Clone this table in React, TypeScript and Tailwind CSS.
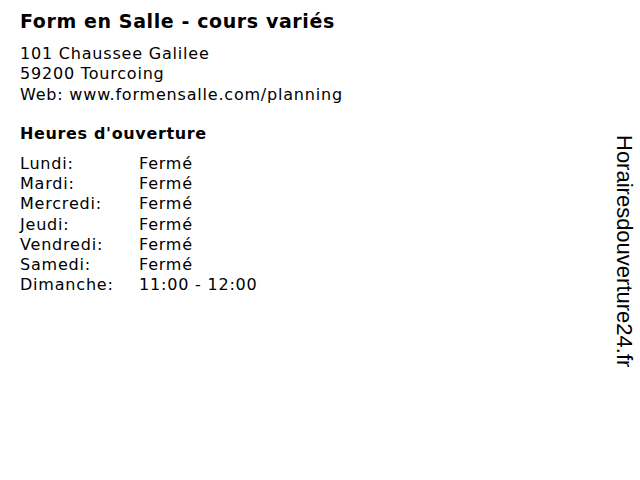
const hours = [
  { day: 'Lundi:', time: 'Fermé' },
  { day: 'Mardi:', time: 'Fermé' },
  { day: 'Mercredi:', time: 'Fermé' },
  { day: 'Jeudi:', time: 'Fermé' },
  { day: 'Vendredi:', time: 'Fermé' },
  { day: 'Samedi:', time: 'Fermé' },
  { day: 'Dimanche:', time: '11:00 - 12:00' },
];

export default function App() {
  return (
    <div className="relative w-[640px] h-[480px] bg-white text-black font-['DejaVu_Sans',sans-serif]">
      <div className="flex flex-col pl-5 pt-[9px]">
        <h1 className="text-[19px] leading-6 font-bold tracking-[0.6px]">Form en Salle - cours variés</h1>
        <div className="mt-[11px] text-[16px] leading-[20.3px] tracking-[0.8px]">
          <div>101 Chaussee Galilee</div>
          <div>59200 Tourcoing</div>
          <div>Web: www.formensalle.com/planning</div>
        </div>
        <h2 className="mt-[19px] text-[16px] leading-5 font-bold tracking-[0.65px]">Heures d'ouverture</h2>
        <div className="mt-[10px] grid grid-cols-[119px_auto] text-[16px] leading-[20.2px] tracking-[0.8px] w-fit">
          {hours.map((h) => (
            <div key={h.day} className="contents">
              <span>{h.day}</span>
              <span>{h.time}</span>
            </div>
          ))}
        </div>
      </div>
      {/* vertical site mark */}
      <div className="absolute right-[5px] top-[135px] [writing-mode:vertical-rl] text-[22px] leading-[22px] font-['Liberation_Sans',sans-serif]">
        Horairesdouverture24.fr
      </div>
    </div>
  );
}
